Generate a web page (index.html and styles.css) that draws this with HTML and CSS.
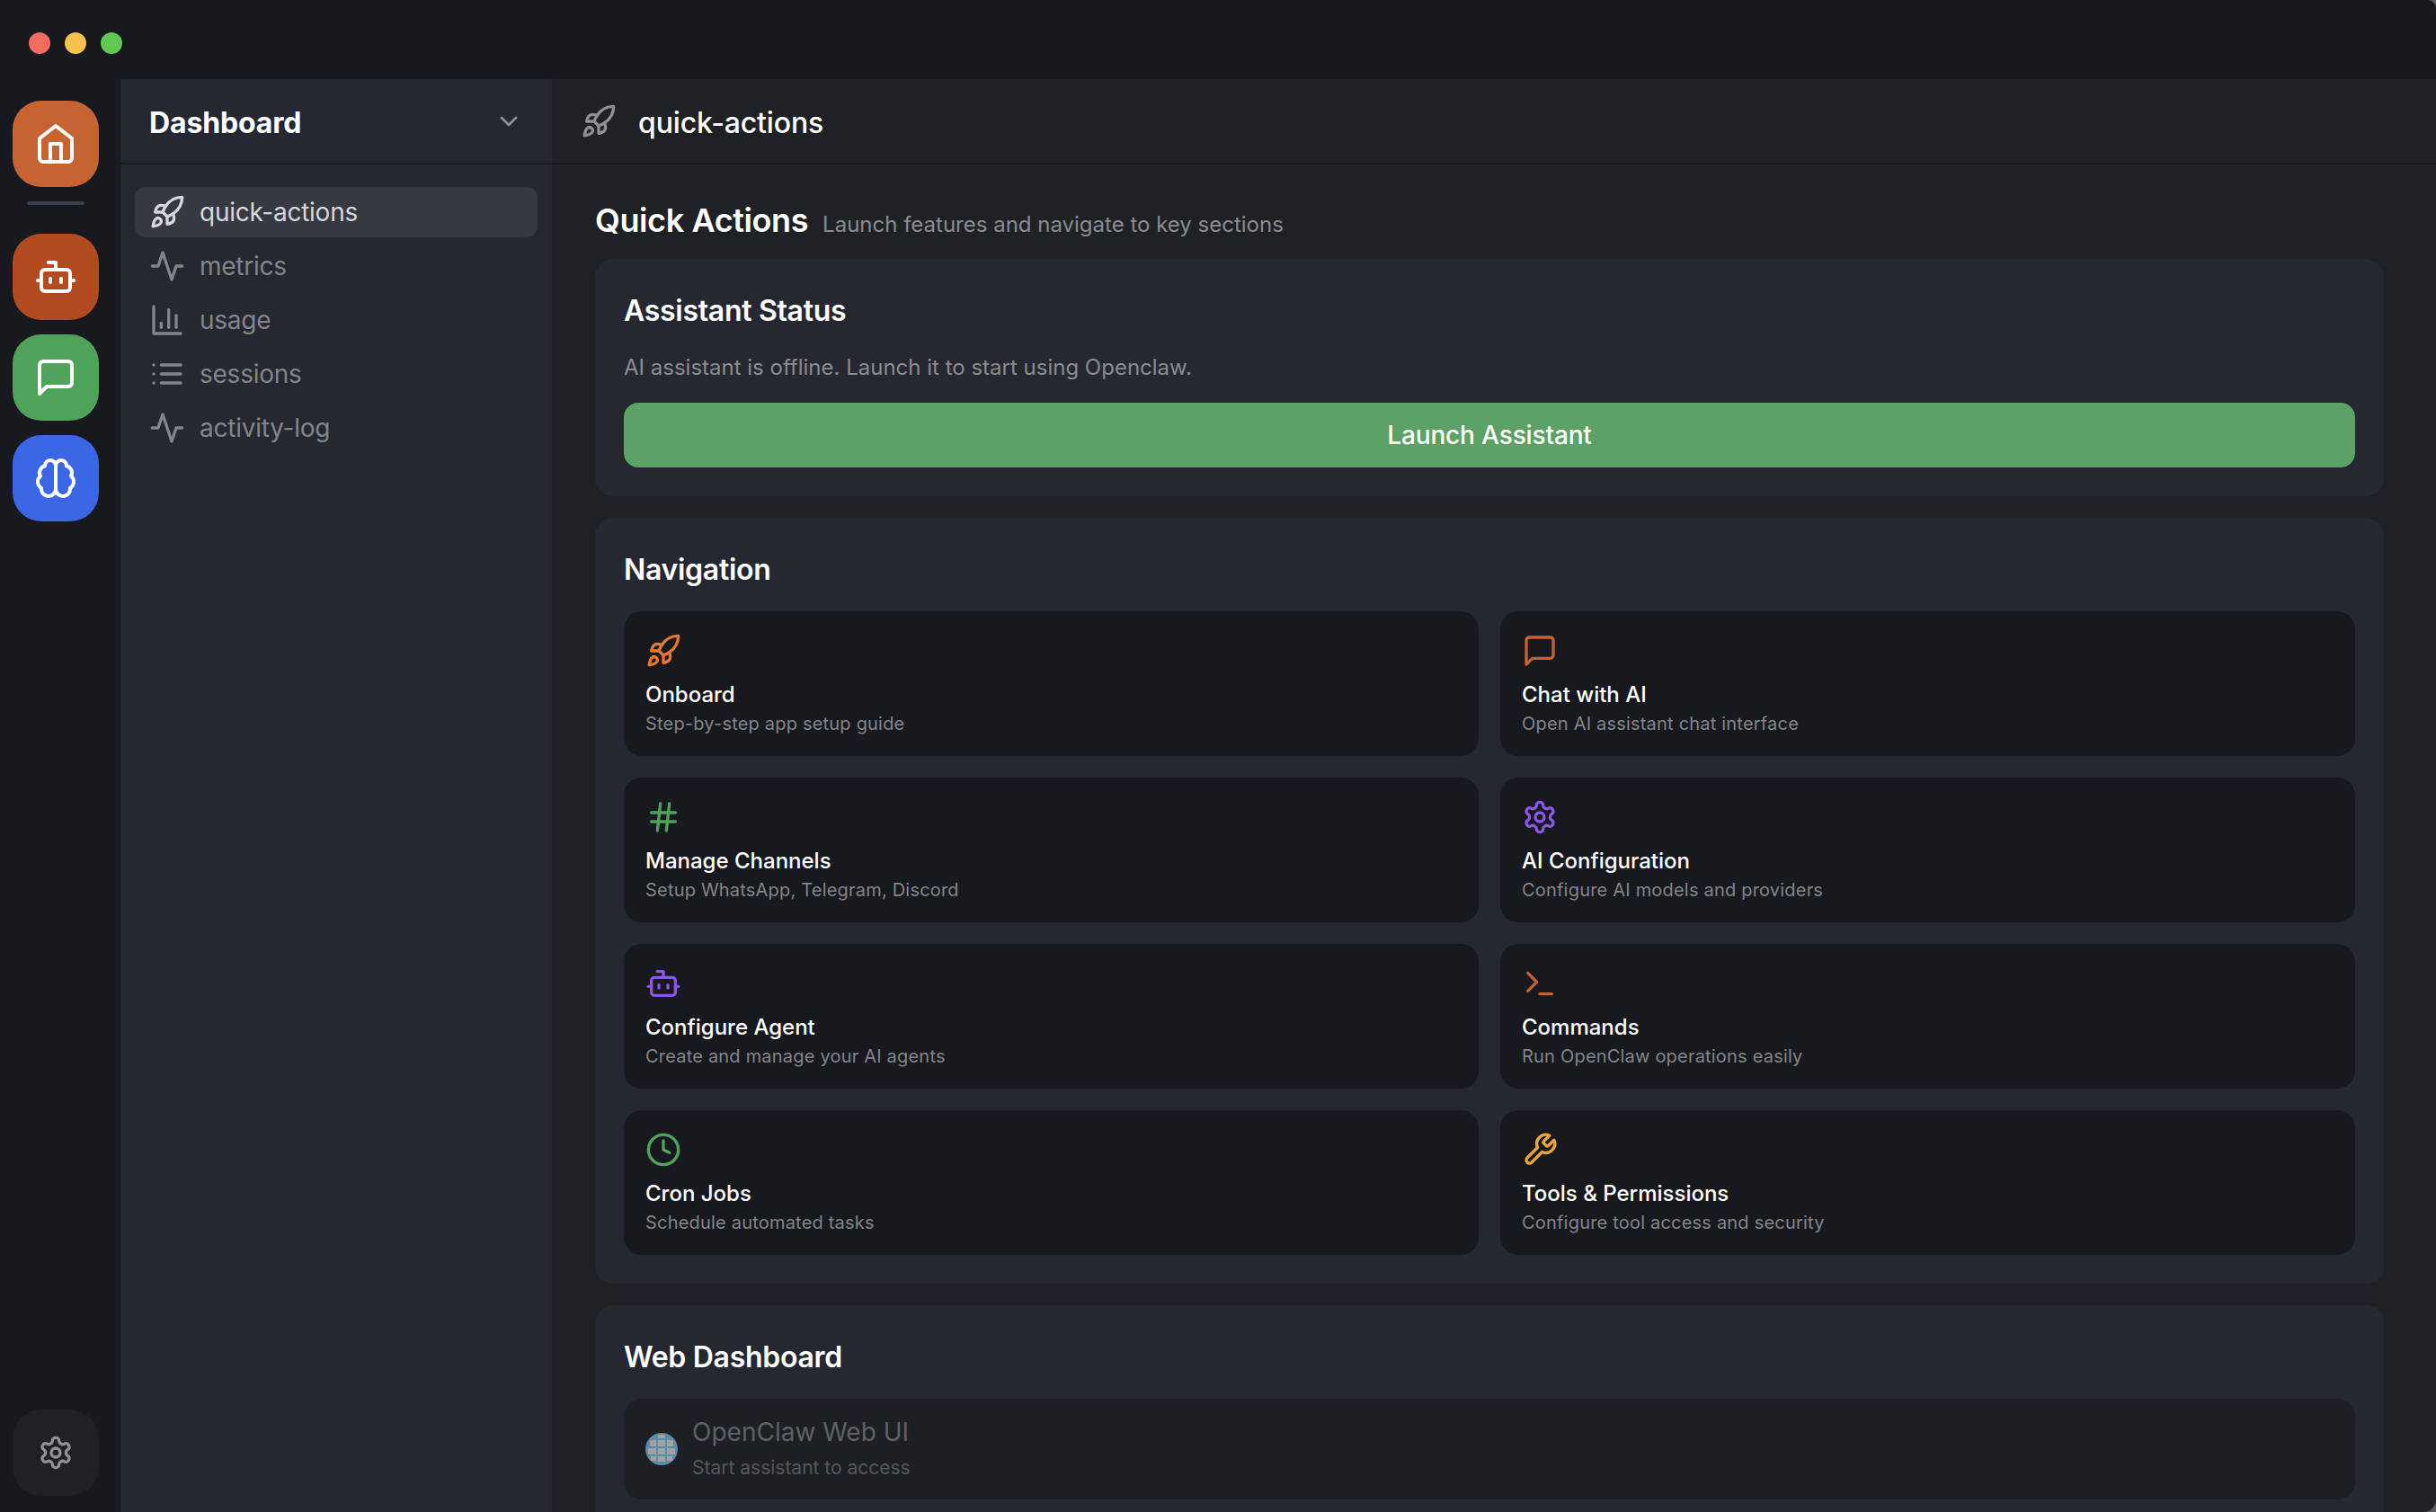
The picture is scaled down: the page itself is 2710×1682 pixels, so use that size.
FILE: index.html
```html
<!DOCTYPE html>
<html lang="en">
<head>
    <meta charset="UTF-8">
    <title>Openclaw - Dashboard</title>
    <link rel="stylesheet" href="styles.css">
</head>
<body>

<!-- Lucide icons used across the page -->
<svg class="sprite" xmlns="http://www.w3.org/2000/svg">
    <symbol id="i-rocket" viewBox="0 0 24 24">
        <path d="M4.5 16.5c-1.5 1.26-2 5-2 5s3.74-.5 5-2c.71-.84.7-2.13-.09-2.91a2.18 2.18 0 0 0-2.91-.09z"/>
        <path d="m12 15-3-3a22 22 0 0 1 2-3.95A12.88 12.88 0 0 1 22 2c0 2.72-.78 7.5-6 11a22.35 22.35 0 0 1-4 2z"/>
        <path d="M9 12H4s.55-3.03 2-4c1.62-1.08 5 0 5 0"/>
        <path d="M12 15v5s3.03-.55 4-2c1.08-1.62 0-5 0-5"/>
    </symbol>
    <symbol id="i-activity" viewBox="0 0 24 24"><path d="M22 12h-4l-3 9L9 3l-3 9H2"/></symbol>
    <symbol id="i-chart" viewBox="0 0 24 24">
        <path d="M3 3v18h18"/><path d="M18 17V9"/><path d="M13 17V5"/><path d="M8 17v-3"/>
    </symbol>
    <symbol id="i-list" viewBox="0 0 24 24">
        <path d="M3 12h.01"/><path d="M3 18h.01"/><path d="M3 6h.01"/><path d="M8 12h13"/><path d="M8 18h13"/><path d="M8 6h13"/>
    </symbol>
    <symbol id="i-home" viewBox="0 0 24 24">
        <path d="m3 9 9-7 9 7v11a2 2 0 0 1-2 2H5a2 2 0 0 1-2-2z"/>
        <path d="M9 22V12h6v10"/>
    </symbol>
    <symbol id="i-bot" viewBox="0 0 24 24">
        <path d="M12 8V4H8"/><rect width="16" height="12" x="4" y="8" rx="2"/><path d="M2 14h2"/><path d="M20 14h2"/><path d="M15 13v2"/><path d="M9 13v2"/>
    </symbol>
    <symbol id="i-chat" viewBox="0 0 24 24"><path d="M21 15a2 2 0 0 1-2 2H7l-4 4V5a2 2 0 0 1 2-2h14a2 2 0 0 1 2 2z"/></symbol>
    <symbol id="i-brain" viewBox="0 0 24 24">
        <path d="M12 5a3 3 0 1 0-5.997.125 4 4 0 0 0-2.526 5.77 4 4 0 0 0 .556 6.588A4 4 0 1 0 12 18Z"/>
        <path d="M12 5a3 3 0 1 1 5.997.125 4 4 0 0 1 2.526 5.77 4 4 0 0 1-.556 6.588A4 4 0 1 1 12 18Z"/>
    </symbol>
    <symbol id="i-hash" viewBox="0 0 24 24">
        <path d="M4 9h16"/><path d="M4 15h16"/><path d="M10 3 8 21"/><path d="M16 3l-2 18"/>
    </symbol>
    <symbol id="i-gear" viewBox="0 0 24 24">
        <path d="M12.22 2h-.44a2 2 0 0 0-2 2v.18a2 2 0 0 1-1 1.73l-.43.25a2 2 0 0 1-2 0l-.15-.08a2 2 0 0 0-2.73.73l-.22.38a2 2 0 0 0 .73 2.73l.15.1a2 2 0 0 1 1 1.72v.51a2 2 0 0 1-1 1.74l-.15.09a2 2 0 0 0-.73 2.73l.22.38a2 2 0 0 0 2.73.73l.15-.08a2 2 0 0 1 2 0l.43.25a2 2 0 0 1 1 1.73V20a2 2 0 0 0 2 2h.44a2 2 0 0 0 2-2v-.18a2 2 0 0 1 1-1.73l.43-.25a2 2 0 0 1 2 0l.15.08a2 2 0 0 0 2.73-.73l.22-.39a2 2 0 0 0-.73-2.73l-.15-.08a2 2 0 0 1-1-1.74v-.5a2 2 0 0 1 1-1.74l.15-.09a2 2 0 0 0 .73-2.73l-.22-.38a2 2 0 0 0-2.73-.73l-.15.08a2 2 0 0 1-2 0l-.43-.25a2 2 0 0 1-1-1.73V4a2 2 0 0 0-2-2z"/>
        <circle cx="12" cy="12" r="3"/>
    </symbol>
    <symbol id="i-terminal" viewBox="0 0 24 24"><path d="M4 17l6-6-6-6"/><path d="M12 19h8"/></symbol>
    <symbol id="i-clock" viewBox="0 0 24 24"><circle cx="12" cy="12" r="10"/><path d="M12 6v6l4 2"/></symbol>
    <symbol id="i-wrench" viewBox="0 0 24 24">
        <path d="M14.7 6.3a1 1 0 0 0 0 1.4l1.6 1.6a1 1 0 0 0 1.4 0l3.77-3.77a6 6 0 0 1-7.94 7.94l-6.91 6.91a2.12 2.12 0 0 1-3-3l6.91-6.91a6 6 0 0 1 7.94-7.94l-3.76 3.76z"/>
    </symbol>
    <symbol id="i-chevron" viewBox="0 0 24 24"><path d="m6 9 6 6 6-6"/></symbol>
</svg>

<div class="window">
    <div class="titlebar">
        <span class="light light-red"></span>
        <span class="light light-yellow"></span>
        <span class="light light-green"></span>
    </div>

    <div class="app">
        <!-- Left rail -->
        <aside class="rail">
            <a class="rail-btn rail-home"><svg class="icon-48"><use href="#i-home"/></svg></a>
            <div class="rail-divider"></div>
            <a class="rail-btn rail-bot"><svg class="icon-48"><use href="#i-bot"/></svg></a>
            <a class="rail-btn rail-chat"><svg class="icon-48"><use href="#i-chat"/></svg></a>
            <a class="rail-btn rail-brain"><svg class="icon-48"><use href="#i-brain"/></svg></a>
            <a class="rail-btn rail-settings"><svg class="icon-40"><use href="#i-gear"/></svg></a>
        </aside>

        <!-- Sidebar -->
        <nav class="sidebar">
            <div class="sidebar-head">
                <span class="sidebar-title">Dashboard</span>
                <svg class="sidebar-chevron"><use href="#i-chevron"/></svg>
            </div>
            <div class="channel-list">
                <a class="channel active"><svg class="icon-40"><use href="#i-rocket"/></svg>quick-actions</a>
                <a class="channel"><svg class="icon-40"><use href="#i-activity"/></svg>metrics</a>
                <a class="channel"><svg class="icon-40"><use href="#i-chart"/></svg>usage</a>
                <a class="channel"><svg class="icon-40"><use href="#i-list"/></svg>sessions</a>
                <a class="channel"><svg class="icon-40"><use href="#i-activity"/></svg>activity-log</a>
            </div>
        </nav>

        <!-- Main content -->
        <main class="main">
            <header class="main-head">
                <svg class="icon-40"><use href="#i-rocket"/></svg>
                <span class="main-head-title">quick-actions</span>
            </header>

            <div class="content">
                <div class="page-title">
                    <h1>Quick Actions</h1>
                    <span>Launch features and navigate to key sections</span>
                </div>

                <section class="card">
                    <h2>Assistant Status</h2>
                    <p class="status-text">AI assistant is offline. Launch it to start using Openclaw.</p>
                    <button class="launch-btn">Launch Assistant</button>
                </section>

                <section class="card">
                    <h2>Navigation</h2>
                    <div class="nav-grid">
                        <a class="nav-card">
                            <svg class="icon-40 c-orange"><use href="#i-rocket"/></svg>
                            <div class="nav-card-title">Onboard</div>
                            <div class="nav-card-desc">Step-by-step app setup guide</div>
                        </a>
                        <a class="nav-card">
                            <svg class="icon-40 c-rust"><use href="#i-chat"/></svg>
                            <div class="nav-card-title">Chat with AI</div>
                            <div class="nav-card-desc">Open AI assistant chat interface</div>
                        </a>
                        <a class="nav-card">
                            <svg class="icon-40 c-green"><use href="#i-hash"/></svg>
                            <div class="nav-card-title">Manage Channels</div>
                            <div class="nav-card-desc">Setup WhatsApp, Telegram, Discord</div>
                        </a>
                        <a class="nav-card">
                            <svg class="icon-40 c-purple"><use href="#i-gear"/></svg>
                            <div class="nav-card-title">AI Configuration</div>
                            <div class="nav-card-desc">Configure AI models and providers</div>
                        </a>
                        <a class="nav-card">
                            <svg class="icon-40 c-purple"><use href="#i-bot"/></svg>
                            <div class="nav-card-title">Configure Agent</div>
                            <div class="nav-card-desc">Create and manage your AI agents</div>
                        </a>
                        <a class="nav-card">
                            <svg class="icon-40 c-rust"><use href="#i-terminal"/></svg>
                            <div class="nav-card-title">Commands</div>
                            <div class="nav-card-desc">Run OpenClaw operations easily</div>
                        </a>
                        <a class="nav-card">
                            <svg class="icon-40 c-green"><use href="#i-clock"/></svg>
                            <div class="nav-card-title">Cron Jobs</div>
                            <div class="nav-card-desc">Schedule automated tasks</div>
                        </a>
                        <a class="nav-card">
                            <svg class="icon-40 c-amber"><use href="#i-wrench"/></svg>
                            <div class="nav-card-title">Tools &amp; Permissions</div>
                            <div class="nav-card-desc">Configure tool access and security</div>
                        </a>
                    </div>
                </section>

                <section class="card">
                    <h2>Web Dashboard</h2>
                    <a class="web-item">
                        <svg class="web-globe" viewBox="0 0 36 36">
                            <ellipse cx="18" cy="18" rx="18" ry="18" fill="#5b8ba6"/>
                            <g fill="#a0a1a3">
                                <rect x="5" y="8" width="7" height="7"/>
                                <rect x="14" y="8" width="8" height="7"/>
                                <rect x="24" y="8" width="7" height="7"/>
                                <rect x="3" y="17" width="9" height="7"/>
                                <rect x="14" y="17" width="8" height="7"/>
                                <rect x="24" y="17" width="9" height="7"/>
                                <rect x="6" y="26" width="6" height="5"/>
                                <rect x="14" y="26" width="8" height="6"/>
                                <rect x="24" y="26" width="6" height="5"/>
                                <rect x="14" y="2" width="8" height="4"/>
                            </g>
                        </svg>
                        <div class="web-text">
                            <div class="web-title">OpenClaw Web UI</div>
                            <div class="web-desc">Start assistant to access</div>
                        </div>
                    </a>
                </section>
            </div>
        </main>
    </div>
</div>

</body>
</html>
```

FILE: styles.css
```css
/* Basic Styling */
html, body {
    margin: 0;
    padding: 0;
    height: 100%;
    background-color: #5c5d62;
    overflow: hidden;
}
body {
    font-family: Inter, "Noto Sans", sans-serif;
    color: #fff;
}
.sprite {
    display: none;
}
svg {
    fill: none;
    stroke: currentColor;
    stroke-width: 2;
    stroke-linecap: round;
    stroke-linejoin: round;
    flex-shrink: 0;
}
.icon-48 {
    width: 48px;
    height: 48px;
}
.icon-40 {
    width: 40px;
    height: 40px;
    display: block;
}

/* Window frame */
.window {
    height: 1682px;
    display: flex;
    flex-direction: column;
    overflow: hidden;
    border-radius: 0 9px 14px 0;
}
.titlebar {
    height: 88px;
    flex-shrink: 0;
    display: flex;
    align-items: center;
    gap: 16px;
    padding: 8px 0 0 32px;
    box-sizing: border-box;
    background-color: #17191e;
}
.light {
    width: 24px;
    height: 24px;
    border-radius: 50%;
}
.light-red { background-color: #f16c62; }
.light-yellow { background-color: #f7c14f; }
.light-green { background-color: #5fc852; }
.app {
    flex: 1;
    display: flex;
    min-height: 0;
}

/* Left rail */
.rail {
    width: 134px;
    flex-shrink: 0;
    display: flex;
    flex-direction: column;
    align-items: flex-start;
    gap: 16px;
    padding: 24px 0 18px 14px;
    box-sizing: border-box;
    background-color: #17191e;
}
.rail-btn {
    width: 96px;
    height: 96px;
    flex-shrink: 0;
    display: flex;
    align-items: center;
    justify-content: center;
    border-radius: 32px;
    color: #fff;
}
.rail-home { background-color: #c56332; }
.rail-bot {
    background-color: #b34b20;
    margin-top: 16px;
}
.rail-chat { background-color: #4fa359; }
.rail-brain { background-color: #3b66e6; }
.rail-settings {
    margin-top: auto;
    background-color: #1f2126;
    color: #8f9196;
}
.rail-divider {
    width: 64px;
    height: 4px;
    margin-left: 16px;
    border-radius: 2px;
    background-color: #3a3f4b;
}

/* Sidebar */
.sidebar {
    width: 480px;
    flex-shrink: 0;
    background-color: #252830;
}
.sidebar-head {
    height: 93px;
    display: flex;
    align-items: center;
    justify-content: space-between;
    padding: 0 32px;
    border-bottom: 2px solid #1b1d22;
}
.sidebar-title {
    padding-top: 3px;
    font-size: 32px;
    font-weight: 700;
    letter-spacing: -0.15px;
}
.sidebar-chevron {
    width: 32px;
    height: 32px;
    color: #8f9196;
}
.channel-list {
    display: flex;
    flex-direction: column;
    gap: 4px;
    padding: 25px 16px;
}
.channel {
    height: 56px;
    display: flex;
    align-items: center;
    gap: 16px;
    padding: 0 16px;
    border-radius: 12px;
    font-size: 28px;
    letter-spacing: -0.25px;
    color: #83858b;
}
.channel.active {
    background-color: #363942;
    color: #d6d7da;
}

/* Main content */
.main {
    flex: 1;
    min-width: 0;
    background-color: #1f2125;
    overflow: hidden;
}
.main-head {
    height: 93px;
    display: flex;
    align-items: center;
    gap: 24px;
    padding: 0 32px;
    border-bottom: 2px solid #1a1b20;
    color: #8f9196;
}
.main-head-title {
    padding-top: 3px;
    font-size: 32px;
    font-weight: 500;
    letter-spacing: -0.15px;
    color: #fff;
}
.content {
    padding: 34px 58px 0 48px;
}
.page-title {
    display: flex;
    align-items: baseline;
    gap: 16px;
    height: 71px;
}
.page-title h1 {
    margin: 0;
    font-size: 36px;
    font-weight: 600;
    line-height: 56px;
    letter-spacing: -0.4px;
}
.page-title span {
    font-size: 24px;
    color: #8a8c92;
}
.card {
    background-color: #252830;
    border-radius: 20px;
    padding: 32px;
    margin-bottom: 24px;
}
.card h2 {
    margin: 0 0 22px;
    padding-top: 2px;
    font-size: 32px;
    font-weight: 600;
    line-height: 48px;
    letter-spacing: -0.3px;
}
.status-text {
    margin: -1px 0 21px;
    font-size: 24px;
    line-height: 36px;
    color: #8a8c92;
}
.launch-btn {
    display: block;
    width: 100%;
    height: 72px;
    border: none;
    border-radius: 16px;
    background-color: #5ca266;
    color: #fff;
    font-family: inherit;
    font-size: 28px;
    font-weight: 500;
    letter-spacing: -0.15px;
}
.nav-grid {
    display: grid;
    grid-template-columns: 1fr 1fr;
    gap: 24px;
}
.nav-card {
    height: 161px;
    box-sizing: border-box;
    padding: 24px;
    border-radius: 20px;
    background-color: #17191e;
}
.nav-card .icon-40 {
    margin-bottom: 12px;
}
.nav-card-title {
    font-size: 24px;
    font-weight: 500;
    line-height: 34px;
}
.nav-card-desc {
    font-size: 20px;
    line-height: 30px;
    letter-spacing: 0.2px;
    color: #83858b;
}
.c-orange { color: #e8762f; }
.c-rust { color: #c5622f; }
.c-green { color: #4fa35a; }
.c-purple { color: #8b55e6; }
.c-amber { color: #e9a53a; }
.web-item {
    height: 112px;
    box-sizing: border-box;
    display: flex;
    align-items: center;
    gap: 16px;
    padding: 0 24px;
    border-radius: 20px;
    background-color: #1d1f24;
}
.web-globe {
    width: 36px;
    height: 36px;
    stroke: none;
}
.web-text {
    padding-bottom: 3px;
}
.web-title {
    margin-bottom: 4px;
    font-size: 28px;
    font-weight: 400;
    line-height: 40px;
    color: #5f6166;
}
.web-desc {
    font-size: 21px;
    line-height: 32px;
    color: #55575c;
}
```
